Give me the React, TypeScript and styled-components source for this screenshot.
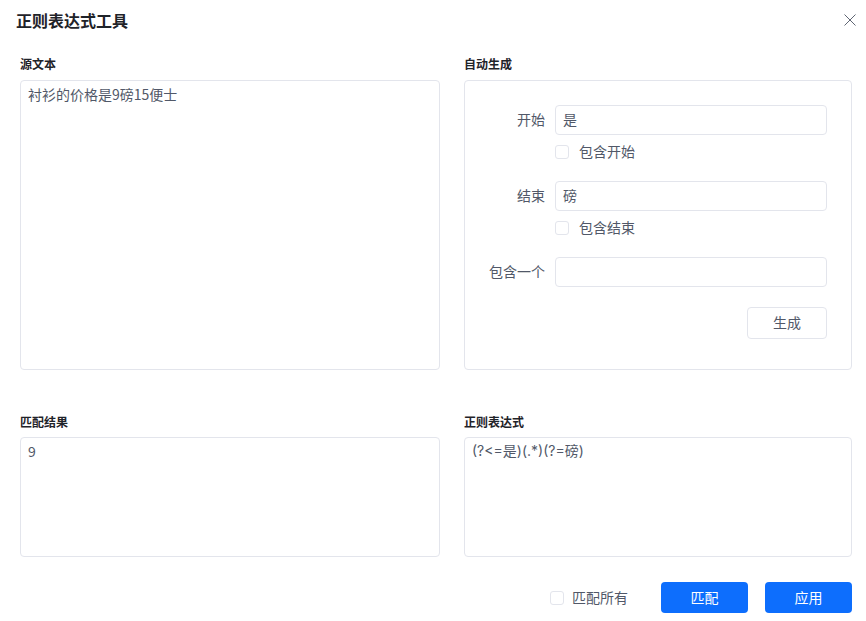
import React from "react";
import styled, { createGlobalStyle } from "styled-components";

const GlobalStyle = createGlobalStyle`
  html, body {
    margin: 0;
    padding: 0;
    background: #fff;
    overflow: hidden;
    font-family: "Noto Sans CJK SC", "Open Sans", sans-serif;
  }
  * {
    box-sizing: border-box;
  }
`;

export default function App() {
  return (
    <>
      <GlobalStyle />
      <Dialog>
        <Header>
          <Title>正则表达式工具</Title>
          <CloseButton aria-label="关闭">
            <svg width="12" height="12" viewBox="0 0 12 12" fill="none">
              <path d="M0.5 0.5L11.5 11.5M11.5 0.5L0.5 11.5" stroke="#5f6673" strokeWidth="1" />
            </svg>
          </CloseButton>
        </Header>
        <Body>
          <Section>
            <SectionLabel>源文本</SectionLabel>
            <TextBox $height={290} defaultValue="衬衫的价格是9磅15便士" />
          </Section>
          <Section>
            <SectionLabel>自动生成</SectionLabel>
            <GeneratePanel>
              <FieldRow>
                <FieldLabel>开始</FieldLabel>
                <TextInput defaultValue="是" />
              </FieldRow>
              <CheckRow>
                <Check />
                <CheckText>包含开始</CheckText>
              </CheckRow>
              <FieldRow>
                <FieldLabel>结束</FieldLabel>
                <TextInput defaultValue="磅" />
              </FieldRow>
              <CheckRow>
                <Check />
                <CheckText>包含结束</CheckText>
              </CheckRow>
              <FieldRow>
                <FieldLabel>包含一个</FieldLabel>
                <TextInput />
              </FieldRow>
              <PanelActions>
                <GenerateButton>生成</GenerateButton>
              </PanelActions>
            </GeneratePanel>
          </Section>
          <Section>
            <LowerLabel>匹配结果</LowerLabel>
            <TextBox $height={120} defaultValue="9" />
          </Section>
          <Section>
            <LowerLabel>正则表达式</LowerLabel>
            <RegexBox $height={120} defaultValue="(?<=是)(.*)(?=磅)" />
          </Section>
        </Body>
        <Footer>
          <MatchAll>
            <Check />
            <MatchAllText>匹配所有</MatchAllText>
          </MatchAll>
          <PrimaryButton>匹配</PrimaryButton>
          <PrimaryButton>应用</PrimaryButton>
        </Footer>
      </Dialog>
    </>
  );
}

const Dialog = styled.div`
  width: 866px;
  height: 621px;
  background: #fff;
  color: #515868;
  font-size: 14px;
`;

const Header = styled.div`
  display: flex;
  align-items: center;
  justify-content: space-between;
  height: 43px;
  padding: 0 10px 3px 16px;
`;

const Title = styled.div`
  font-size: 16px;
  font-weight: 700;
  color: #1f2329;
  line-height: 22px;
`;

const CloseButton = styled.button`
  display: flex;
  padding: 0;
  border: 0;
  background: none;
`;

const Body = styled.div`
  display: grid;
  grid-template-columns: 420px 388px;
  column-gap: 24px;
  row-gap: 43px;
  padding: 12px 14px 0 20px;
`;

const Section = styled.div`
  display: flex;
  flex-direction: column;
`;

const SectionLabel = styled.div`
  height: 25px;
  font-size: 12px;
  font-weight: 700;
  line-height: 18px;
  color: #1f2329;
`;

const LowerLabel = styled(SectionLabel)`
  height: 24px;
`;

const TextBox = styled.textarea<{ $height: number }>`
  display: block;
  width: 100%;
  height: ${(props) => props.$height}px;
  padding: 2px 7px;
  border: 1px solid #e3e5ec;
  border-radius: 4px;
  outline: none;
  resize: none;
  font-family: inherit;
  font-size: 14px;
  line-height: 22px;
  color: #515868;
  background: #fff;
`;

const RegexBox = styled(TextBox)`
  font-family: "Inter", "Noto Sans CJK SC", sans-serif;
`;

const GeneratePanel = styled.div`
  height: 290px;
  padding: 24px 24px 0 0;
  border: 1px solid #e3e5ec;
  border-radius: 4px;
`;

const FieldRow = styled.div`
  display: flex;
  align-items: center;
  gap: 10px;
`;

const FieldLabel = styled.div`
  width: 80px;
  padding-bottom: 2px;
  text-align: right;
  font-size: 14px;
  line-height: 28px;
`;

const TextInput = styled.input`
  width: 272px;
  height: 30px;
  padding: 0 7px 2px;
  border: 1px solid #e3e5ec;
  border-radius: 4px;
  outline: none;
  font-family: inherit;
  font-size: 14px;
  color: #515868;
`;

const CheckRow = styled.div`
  display: flex;
  align-items: center;
  height: 22px;
  margin: 6px 0 18px 90px;
`;

const Check = styled.span`
  display: block;
  width: 14px;
  height: 14px;
  border: 1px solid #e3e5ec;
  border-radius: 3px;
  background: #fff;
`;

const CheckText = styled.span`
  margin-left: 10px;
  margin-top: -2px;
  line-height: 22px;
`;

const PanelActions = styled.div`
  display: flex;
  justify-content: flex-end;
  margin-top: 20px;
`;

const GenerateButton = styled.button`
  width: 80px;
  height: 32px;
  padding: 0 0 2px;
  border: 1px solid #e3e5ec;
  border-radius: 4px;
  background: #fff;
  font-family: inherit;
  font-size: 14px;
  color: #515868;
`;

const Footer = styled.div`
  display: flex;
  align-items: center;
  justify-content: flex-end;
  gap: 17px;
  padding: 25px 14px 0 0;
`;

const MatchAll = styled.div`
  display: flex;
  align-items: center;
  margin-right: 16px;
`;

const MatchAllText = styled.span`
  margin-left: 8px;
  margin-top: -1px;
  line-height: 22px;
`;

const PrimaryButton = styled.button`
  width: 87px;
  height: 31px;
  padding: 0 0 2px;
  border: 0;
  border-radius: 4px;
  background: #0d6efd;
  font-family: inherit;
  font-size: 14px;
  color: #fff;
`;
